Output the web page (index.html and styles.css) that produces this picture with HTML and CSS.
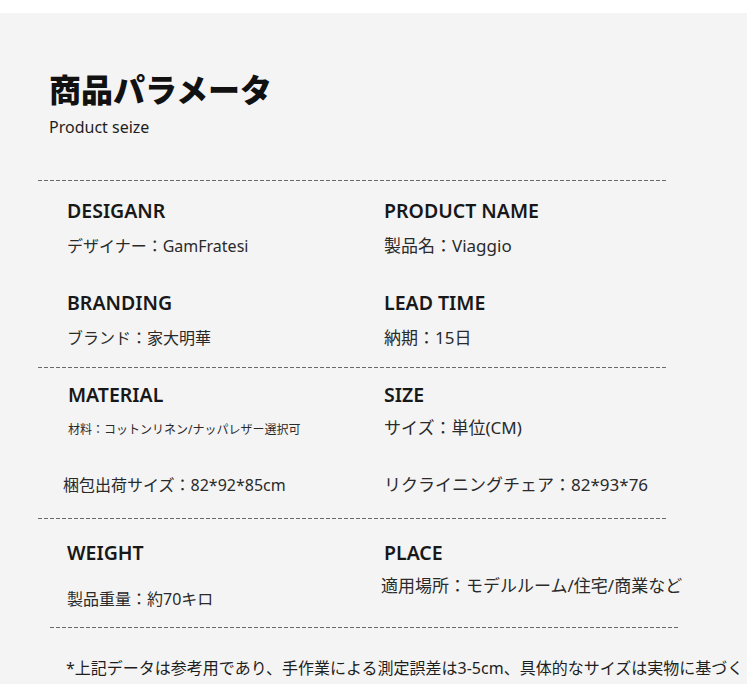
FILE: index.html
```html
<!DOCTYPE html>
<html lang="ja">
<head>
<meta charset="utf-8">
<title>商品パラメータ</title>
<link rel="stylesheet" href="styles.css">
</head>
<body>
<div class="panel">
  <header class="head">
    <h1 class="title">商品パラメータ</h1>
    <p class="subtitle">Product seize</p>
  </header>

  <div class="rule"></div>

  <section class="sec sec1">
    <div class="col">
      <div class="item">
        <h2 class="label">DESIGANR</h2>
        <p class="value">デザイナー：GamFratesi</p>
      </div>
      <div class="item item-next">
        <h2 class="label">BRANDING</h2>
        <p class="value">ブランド：家大明華</p>
      </div>
    </div>
    <div class="col">
      <div class="item">
        <h2 class="label">PRODUCT NAME</h2>
        <p class="value value-r">製品名：Viaggio</p>
      </div>
      <div class="item item-next">
        <h2 class="label">LEAD TIME</h2>
        <p class="value value-r">納期：15日</p>
      </div>
    </div>
  </section>

  <div class="rule"></div>

  <section class="sec sec2">
    <div class="col">
      <h2 class="label">MATERIAL</h2>
      <p class="small">材料：コットンリネン/ナッパレザー選択可</p>
      <p class="value pack">梱包出荷サイズ：82*92*85cm</p>
    </div>
    <div class="col">
      <h2 class="label">SIZE</h2>
      <p class="value value-r unit">サイズ：単位(CM)</p>
      <p class="value value-r chair">リクライニングチェア：82*93*76</p>
    </div>
  </section>

  <div class="rule"></div>

  <section class="sec sec3">
    <div class="col">
      <h2 class="label">WEIGHT</h2>
      <p class="value weight">製品重量：約70キロ</p>
    </div>
    <div class="col">
      <h2 class="label">PLACE</h2>
      <p class="value value-r place">適用場所：モデルルーム/住宅/商業など</p>
    </div>
  </section>

  <div class="rule rule-shift"></div>

  <p class="note">*上記データは参考用であり、手作業による測定誤差は3-5cm、具体的なサイズは実物に基づく</p>
</div>
</body>
</html>
```

FILE: styles.css
```css
* {
  box-sizing: border-box;
}

html, body {
  margin: 0;
  padding: 0;
  background: #ffffff;
}

body {
  font-family: "Noto Sans", "Noto Sans CJK JP", sans-serif;
  color: #222;
  overflow: hidden;
  height: 684px;
}

.panel {
  margin-top: 13px;
  width: 747px;
  min-height: 671px;
  background: #f4f4f4;
  padding-top: 56px;
}

.head {
  padding-left: 49px;
}

.title {
  margin: 0;
  font-family: "Noto Sans CJK JP", sans-serif;
  font-size: 32px;
  line-height: 38px;
  font-weight: 900;
  color: #111111;
  letter-spacing: 0;
}

.subtitle {
  margin: 9px 0 0;
  font-size: 16px;
  line-height: 22px;
  color: #1e1e1e;
}

.rule {
  margin-top: 42px;
  margin-left: 38px;
  width: 628px;
  height: 1px;
  background: repeating-linear-gradient(90deg, #6a6a6a 0 4px, transparent 4px 6px);
}

.sec + .rule {
  margin-top: 0;
}

.rule-shift {
  margin-left: 50px;
}

.sec {
  display: grid;
  grid-template-columns: 317px 1fr;
  padding-left: 67px;
}

.col {
  display: flex;
  flex-direction: column;
  align-items: flex-start;
}

.label {
  margin: 0;
  font-size: 19.5px;
  line-height: 26px;
  font-weight: 600;
  color: #181818;
}

.value {
  margin: 0;
  font-size: 16px;
  line-height: 24px;
  color: #2a2a2a;
  white-space: nowrap;
}

.value-r {
  font-size: 17px;
}

.small {
  margin: 13px 0 0;
  font-size: 12px;
  line-height: 18px;
  color: #2a2a2a;
  white-space: nowrap;
}

/* section 1 */
.sec1 {
  padding-top: 16.5px;
  padding-bottom: 17.5px;
}

.item .value {
  margin-top: 10px;
}

.item-next {
  margin-top: 32px;
}

/* section 2 */
.sec2 {
  padding-top: 13.5px;
  padding-bottom: 21px;
}

.sec2 .col:first-child {
  padding-left: 1px;
}

.pack {
  margin-top: 34.5px;
  margin-left: -5px;
}

.unit {
  margin-top: 8px;
}

.chair {
  margin-top: 33.5px;
}

/* section 3 */
.sec3 {
  padding-top: 20.5px;
  padding-bottom: 16px;
}

.weight {
  margin-top: 21.5px;
}

.place {
  margin-top: 8px;
  margin-left: -3px;
}

.note {
  margin: 27.5px 0 0;
  padding-left: 66px;
  font-size: 16px;
  line-height: 24px;
  color: #1e1e1e;
  white-space: nowrap;
}
```
